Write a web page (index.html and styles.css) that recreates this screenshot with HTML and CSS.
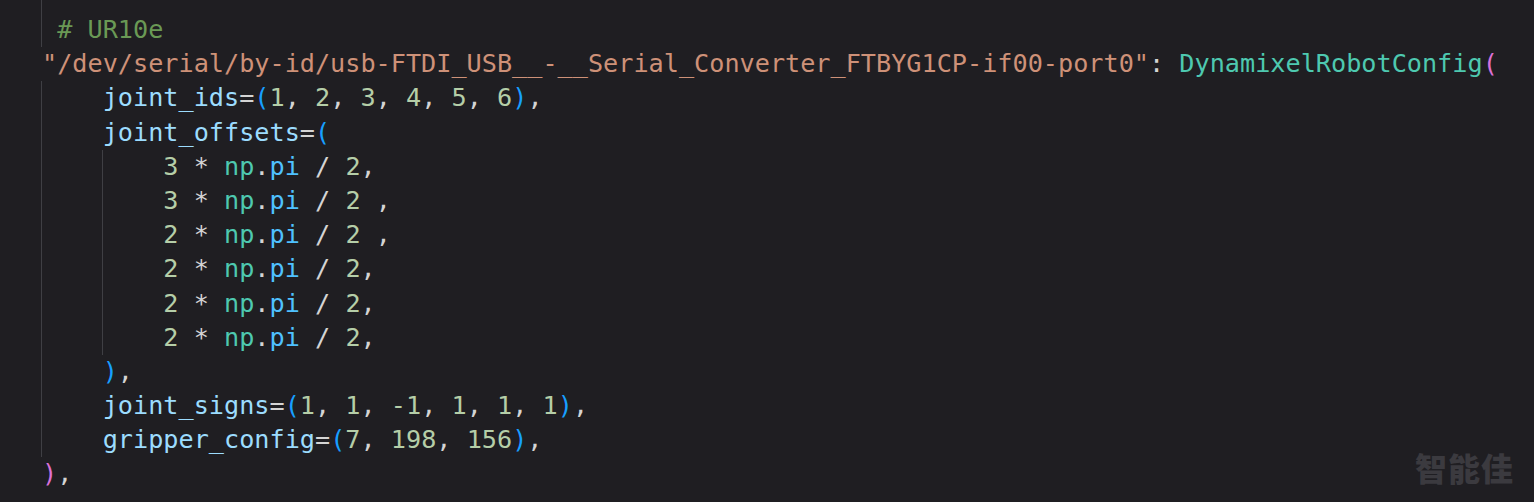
FILE: index.html
```html
<!DOCTYPE html>
<html lang="en">
<head>
<meta charset="utf-8">
<title>UR10e config</title>
<link rel="stylesheet" href="styles.css">
</head>
<body>
<div class="editor">
  <pre class="code"><div class="lead"><span class="g lead-g"></span></div><div class="line"><span class="g"> </span><span class="c"># UR10e</span></div><div class="line"><span class="s">"/dev/serial/by-id/usb-FTDI_USB__-__Serial_Converter_FTBYG1CP-if00-port0"</span><span class="p">: </span><span class="cls">DynamixelRobotConfig</span><span class="b2">(</span></div><div class="line"><span class="g">    </span><span class="v">joint_ids</span><span class="p">=</span><span class="b3">(</span><span class="n">1</span><span class="p">, </span><span class="n">2</span><span class="p">, </span><span class="n">3</span><span class="p">, </span><span class="n">4</span><span class="p">, </span><span class="n">5</span><span class="p">, </span><span class="n">6</span><span class="b3">)</span><span class="p">,</span></div><div class="line"><span class="g">    </span><span class="v">joint_offsets</span><span class="p">=</span><span class="b3">(</span></div><div class="line"><span class="g">    </span><span class="g">    </span><span class="n">3</span><span class="p"> * </span><span class="m">np</span><span class="p">.</span><span class="k">pi</span><span class="p"> / </span><span class="n">2</span><span class="p">,</span></div><div class="line"><span class="g">    </span><span class="g">    </span><span class="n">3</span><span class="p"> * </span><span class="m">np</span><span class="p">.</span><span class="k">pi</span><span class="p"> / </span><span class="n">2</span><span class="p"> ,</span></div><div class="line"><span class="g">    </span><span class="g">    </span><span class="n">2</span><span class="p"> * </span><span class="m">np</span><span class="p">.</span><span class="k">pi</span><span class="p"> / </span><span class="n">2</span><span class="p"> ,</span></div><div class="line"><span class="g">    </span><span class="g">    </span><span class="n">2</span><span class="p"> * </span><span class="m">np</span><span class="p">.</span><span class="k">pi</span><span class="p"> / </span><span class="n">2</span><span class="p">,</span></div><div class="line"><span class="g">    </span><span class="g">    </span><span class="n">2</span><span class="p"> * </span><span class="m">np</span><span class="p">.</span><span class="k">pi</span><span class="p"> / </span><span class="n">2</span><span class="p">,</span></div><div class="line"><span class="g">    </span><span class="g">    </span><span class="n">2</span><span class="p"> * </span><span class="m">np</span><span class="p">.</span><span class="k">pi</span><span class="p"> / </span><span class="n">2</span><span class="p">,</span></div><div class="line"><span class="g">    </span><span class="b3">)</span><span class="p">,</span></div><div class="line"><span class="g">    </span><span class="v">joint_signs</span><span class="p">=</span><span class="b3">(</span><span class="n">1</span><span class="p">, </span><span class="n">1</span><span class="p">, </span><span class="n">-1</span><span class="p">, </span><span class="n">1</span><span class="p">, </span><span class="n">1</span><span class="p">, </span><span class="n">1</span><span class="b3">)</span><span class="p">,</span></div><div class="line"><span class="g">    </span><span class="v">gripper_config</span><span class="p">=</span><span class="b3">(</span><span class="n">7</span><span class="p">, </span><span class="n">198</span><span class="p">, </span><span class="n">156</span><span class="b3">)</span><span class="p">,</span></div><div class="line"><span class="b2">)</span><span class="p">,</span></div></pre>
  <div class="watermark">智能佳</div>
</div>
</body>
</html>
```

FILE: styles.css
```css
html, body {
  margin: 0;
  padding: 0;
  background: #1f1e22;
}
.editor {
  position: relative;
  width: 1534px;
  height: 502px;
  overflow: hidden;
  background: #1f1e22;
}
.code {
  margin: 0;
  padding: 0 0 0 42px;
  font-family: "DejaVu Sans Mono", monospace;
  font-size: 25.2px;
  line-height: 34.2px;
  color: #d4d4d4;
  white-space: pre;
}
.lead {
  height: 13px;
  line-height: 13px;
}
.line {
  height: 34.2px;
}
.g {
  display: inline-block;
  height: 34.2px;
  vertical-align: top;
  box-shadow: inset 1px 0 0 #3f3f44;
  margin-left: -1px;
  padding-left: 1px;
}
.lead-g {
  height: 13px;
  width: 1px;
}
.c { color: #6a9955; }
.s { color: #ce9178; }
.cls { color: #4ec9b0; }
.v { color: #9cdcfe; }
.n { color: #b5cea8; }
.m { color: #4ec9b0; }
.k { color: #4fc1ff; }
.p { color: #d4d4d4; }
.b2 { color: #da70d6; }
.b3 { color: #179fff; }
.watermark {
  position: absolute;
  right: 20px;
  bottom: 17px;
  font-family: "Noto Sans CJK SC", sans-serif;
  font-weight: 900;
  font-size: 32px;
  line-height: 36px;
  letter-spacing: 1px;
  color: #3b3a3f;
}
```
